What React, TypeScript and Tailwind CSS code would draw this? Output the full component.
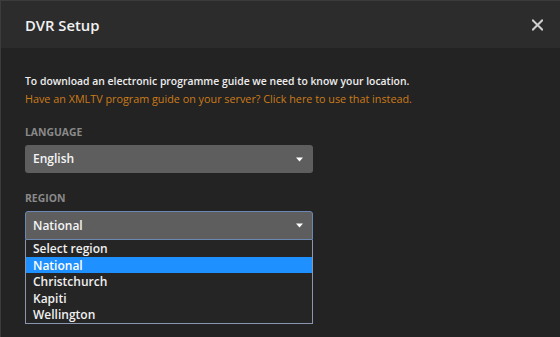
import React from 'react';

const font = { fontFamily: '"Open Sans", "Noto Sans", sans-serif' };

const Caret = () => (
  <svg width="7" height="5" viewBox="0 0 7 5" className="block">
    <path d="M0 0.5 H7 L3.5 4.5 Z" fill="#ffffff" />
  </svg>
);

const regions = ['Select region', 'National', 'Christchurch', 'Kapiti', 'Wellington'];

export default function App() {
  const selected = 'National';

  return (
    <div
      className="w-[560px] h-[337px] overflow-hidden bg-[#232323] border-t border-l border-[#3c3c3c] text-white"
      style={font}
    >
      <header className="h-[47px] bg-[#2c2c2c] flex items-center justify-between pl-[24px] pr-[17px]">
        <h1 className="text-[14.8px] font-semibold text-[#f2f2f2] pt-[1px]">DVR Setup</h1>
        <button className="w-[11px] h-[11px] flex items-center justify-center" aria-label="Close">
          <svg width="12" height="12" viewBox="0 0 12 12">
            <path d="M1 1 L11 11 M11 1 L1 11" stroke="#cfcfcf" strokeWidth="2.2" strokeLinecap="square" />
          </svg>
        </button>
      </header>

      <div className="pl-[24px] pt-[24px]">
        <p className="text-[10.4px] leading-[18px] font-semibold text-[#eeeeee]">
          To download an electronic programme guide we need to know your location.
        </p>
        <p className="text-[10.8px] leading-[18px] font-medium text-[#cc7b19]">
          Have an XMLTV program guide on your server? Click here to use that instead.
        </p>

        <div className="mt-[17px]">
          <div className="text-[10.4px] leading-[14px] font-bold text-[#8a8a8a]">LANGUAGE</div>
          <div className="mt-[6px] w-[288px] h-[28px] rounded-[3px] bg-[#5e5e5e] flex items-center justify-between pl-[8px] pr-[10px]">
            <span className="text-[12px] font-semibold text-[#f5f5f5]">English</span>
            <Caret />
          </div>
        </div>

        <div className="mt-[18px]">
          <div className="text-[10.4px] leading-[14px] font-bold text-[#8a8a8a]">REGION</div>
          <div className="mt-[6px] w-[288px]">
            <div className="h-[29px] rounded-t-[3px] bg-[#5e5e5e] border border-[#6d87b3] flex items-center justify-between pl-[7px] pr-[9px]">
              <span className="text-[12px] font-semibold text-[#f5f5f5]">National</span>
              <Caret />
            </div>
            <ul className="border border-t-0 border-[#8a96ad] bg-[#252525]">
              {regions.map(r => (
                <li
                  key={r}
                  className={`h-[16.6px] leading-[18px] pl-[7px] text-[12px] font-semibold overflow-visible ${
                    r === selected ? 'bg-[#1e90ff] text-white' : 'text-[#f0f0f0]'
                  }`}
                >
                  {r}
                </li>
              ))}
            </ul>
          </div>
        </div>
      </div>
    </div>
  );
}
